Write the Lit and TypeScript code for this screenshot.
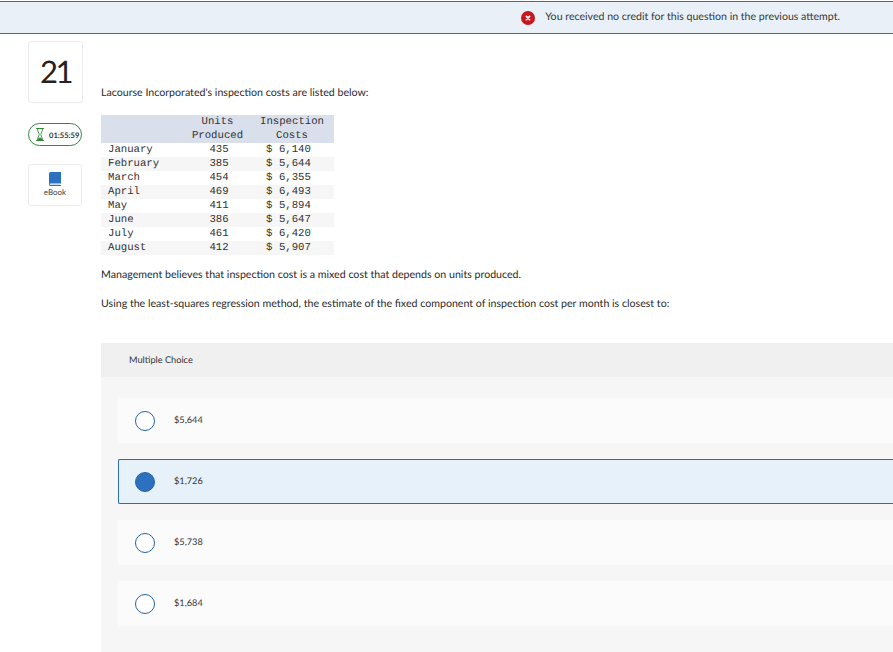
import { LitElement, html, css } from 'lit';
import { customElement } from 'lit/decorators.js';

const ROWS = [
  ['January', '435', '$ 6,140'],
  ['February', '385', '$ 5,644'],
  ['March', '454', '$ 6,355'],
  ['April', '469', '$ 6,493'],
  ['May', '411', '$ 5,894'],
  ['June', '386', '$ 5,647'],
  ['July', '461', '$ 6,420'],
  ['August', '412', '$ 5,907'],
];

const CHOICES = [
  { label: '$5,644', selected: false },
  { label: '$1,726', selected: true },
  { label: '$5,738', selected: false },
  { label: '$1,684', selected: false },
];

@customElement('app-root')
export class AppRoot extends LitElement {
  static styles = css`
    :host {
      display: block;
      width: 893px;
      height: 652px;
      overflow: hidden;
      background: #fff;
      color: #2c2c2c;
      font-family: 'Lato', 'Open Sans', sans-serif;
      text-rendering: geometricPrecision;
    }

    .notice {
      height: 31px;
      margin-top: 1px;
      border-top: 1px solid #2f6cb5;
      border-bottom: 1px solid #2f6cb5;
      background: #e9f0f8;
      display: flex;
      align-items: center;
      justify-content: flex-end;
      gap: 10px;
      padding-right: 53px;
      font-size: 10.6px;
      color: #3a3a3a;
    }

    .notice svg { display: block; }
    .notice span { margin-bottom: 2px; }

    .page {
      display: flex;
      align-items: flex-start;
    }

    .side {
      width: 101px;
      flex: none;
      padding: 7px 0 0 28px;
      box-sizing: border-box;
      display: flex;
      flex-direction: column;
      align-items: flex-start;
    }

    .num {
      width: 55px;
      height: 62px;
      box-sizing: border-box;
      border: 1px solid #ececec;
      border-radius: 3px;
      padding-bottom: 3px;
      display: flex;
      align-items: center;
      justify-content: center;
      font-size: 31px;
      letter-spacing: -2.5px;
      color: #222;
    }

    .timer {
      margin-top: 20px;
      width: 54px;
      height: 23px;
      box-sizing: border-box;
      border: 1px solid #2f8a3c;
      border-radius: 12px;
      display: flex;
      align-items: center;
      gap: 5px;
      padding-left: 7px;
      font-size: 7.6px;
      font-weight: 700;
      color: #333;
    }

    .ebook {
      margin-top: 18px;
      width: 54px;
      height: 42px;
      box-sizing: border-box;
      border: 1px solid #ececec;
      border-radius: 3px;
      display: flex;
      flex-direction: column;
      align-items: center;
      justify-content: flex-start;
      padding-top: 7px;
      gap: 1px;
      font-size: 8px;
      color: #444;
    }

    .main {
      flex: 1;
      min-width: 0;
    }

    .intro {
      margin: 52px 0 0;
      font-size: 10.64px;
      line-height: 14px;
    }

    table {
      margin-top: 15px;
      border-collapse: collapse;
      table-layout: fixed;
      width: 233px;
      font-family: 'Liberation Mono', monospace;
      font-size: 10.67px;
      color: #333;
    }

    th, td {
      height: 14px;
      padding: 0;
      line-height: 14px;
      font-weight: 400;
      text-align: center;
    }

    thead tr { background: #d9dfeb; }
    tbody tr:nth-child(even) td { background: #f6f6f6; }
    td.month { text-align: left; padding-left: 7px; }
    td.units { padding-left: 3px; }
    td.cost { padding-right: 7px; }
    .col-month { width: 84px; }
    .col-units { width: 65px; }

    .copy {
      margin: 13px 0 0;
      font-size: 10.64px;
      line-height: 14px;
    }

    .copy + .copy { margin-top: 15px; }

    .mc {
      margin-top: 32px;
      background: #f6f6f6;
      height: 309px;
    }

    .mc-head {
      height: 34px;
      background: #f0f0f0;
      display: flex;
      align-items: center;
      padding-left: 28px;
      font-size: 9.2px;
      color: #333;
    }

    .mc-head span { margin-bottom: 2px; }

    .choices {
      padding: 21px 0 0 17px;
      display: flex;
      flex-direction: column;
      gap: 16px;
    }

    .choice {
      height: 45px;
      box-sizing: border-box;
      background: #fbfbfb;
      border-radius: 2px 0 0 2px;
      display: flex;
      align-items: center;
      gap: 19px;
      padding-left: 17px;
      font-size: 9.2px;
      color: #333;
    }

    .choice span { margin-bottom: 3px; }

    .choice.on {
      background: #e7f1fa;
      border: 1px solid #2a6db5;
      border-right: none;
      padding-left: 16px;
    }

    .radio {
      width: 20px;
      height: 20px;
      box-sizing: border-box;
      border: 1px solid #2464a8;
      border-radius: 50%;
      background: #fff;
    }

    .on .radio { background: #2d70bf; }
  `;

  render() {
    return html`
      <div class="notice">
        <svg width="14" height="14" viewBox="0 0 14 14">
          <circle cx="7" cy="7" r="7" fill="#c8161d"></circle>
          <path d="M5.4 5.4l3.2 3.2M8.6 5.4l-3.2 3.2" stroke="#fff" stroke-width="1.7" stroke-linecap="round"></path>
        </svg>
        <span>You received no credit for this question in the previous attempt.</span>
      </div>
      <div class="page">
        <div class="side">
          <div class="num">21</div>
          <div class="timer">
            <svg width="8" height="13" viewBox="0 0 8 13">
              <path d="M.5.5h7M.5 12.5h7" fill="none" stroke="#2f8a3c" stroke-width="1" stroke-linecap="round"></path>
              <path d="M1.5 1c0 2.6 1.6 3.6 1.6 5.5S1.5 9.4 1.5 12M6.5 1c0 2.6-1.6 3.6-1.6 5.5s1.6 2.9 1.6 5.5" fill="none" stroke="#2f8a3c" stroke-width=".9"></path>
              <path d="M1.6 12c0-1.6 1.6-2.6 2.4-2.6s2.4 1 2.4 2.6z" fill="#2f8a3c"></path>
            </svg>
            <span>01:55:59</span>
          </div>
          <div class="ebook">
            <svg width="12" height="14" viewBox="0 0 12 14">
              <path d="M1.5 0H12v11.6H1.5a.7.7 0 0 0 0 1.4H12v1H1.5A1.5 1.5 0 0 1 0 12.5v-11A1.5 1.5 0 0 1 1.5 0z" fill="#2d70bf"></path>
              <path d="M1.5 12.3H11" stroke="#a9c6e8" stroke-width=".8"></path>
            </svg>
            <span>eBook</span>
          </div>
        </div>
        <div class="main">
          <p class="intro">Lacourse Incorporated's inspection costs are listed below:</p>
          <table>
            <thead>
              <tr><th class="col-month"></th><th class="col-units">Units</th><th>Inspection</th></tr>
              <tr><th></th><th>Produced</th><th>Costs</th></tr>
            </thead>
            <tbody>
              ${ROWS.map(
                ([month, units, cost]) => html`
                  <tr><td class="month">${month}</td><td class="units">${units}</td><td class="cost">${cost}</td></tr>
                `
              )}
            </tbody>
          </table>
          <p class="copy">Management believes that inspection cost is a mixed cost that depends on units produced.</p>
          <p class="copy">Using the least-squares regression method, the estimate of the fixed component of inspection cost per month is closest to:</p>
          <div class="mc">
            <div class="mc-head"><span>Multiple Choice</span></div>
            <div class="choices">
              ${CHOICES.map(
                (c) => html`
                  <div class="choice ${c.selected ? 'on' : ''}">
                    <div class="radio"></div>
                    <span>${c.label}</span>
                  </div>
                `
              )}
            </div>
          </div>
        </div>
      </div>
    `;
  }
}
